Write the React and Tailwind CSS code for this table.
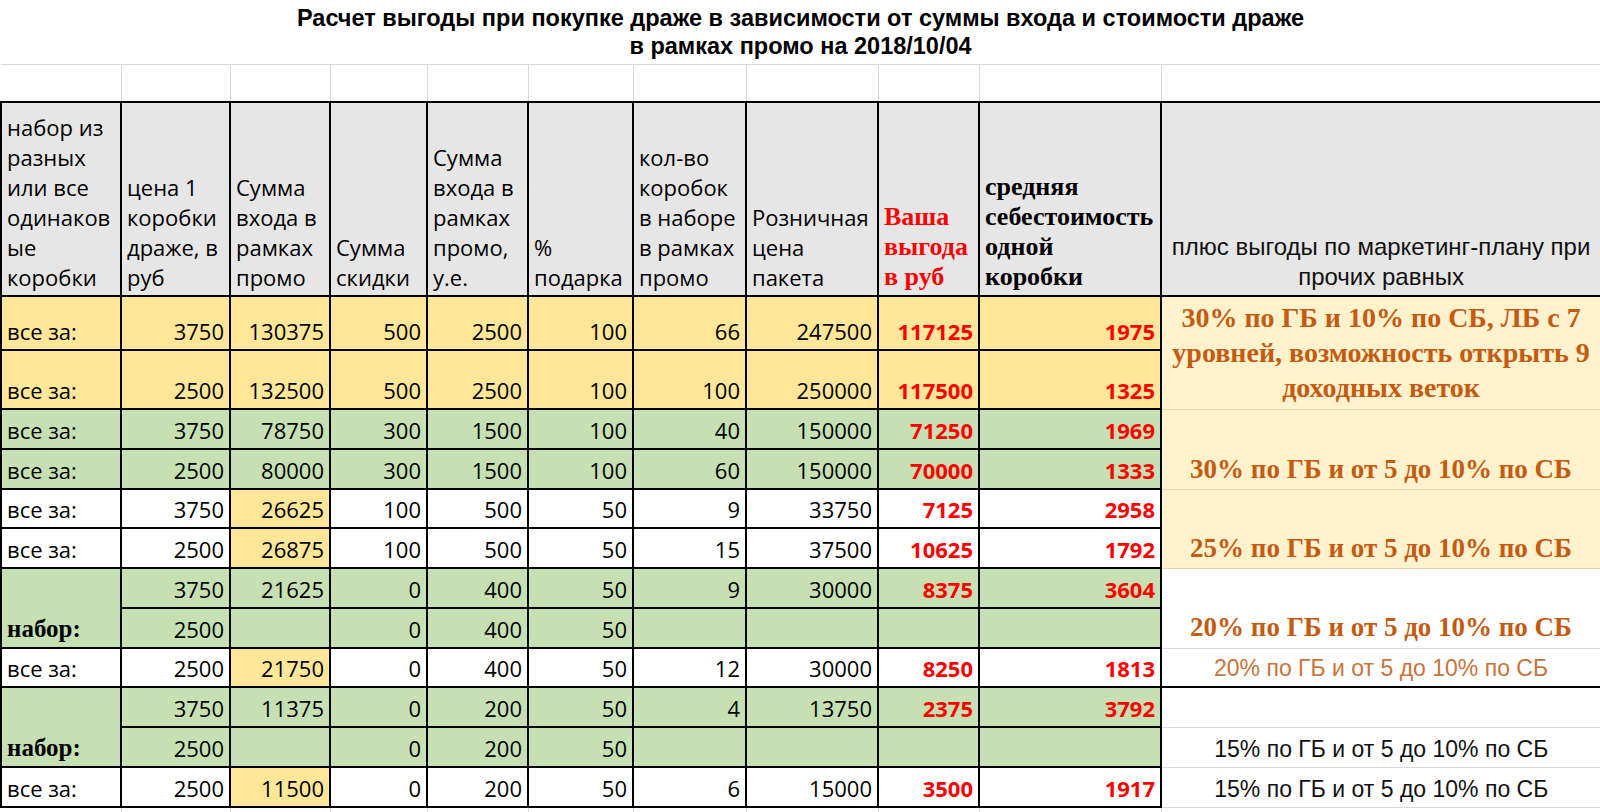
import React from "react";

const Y = "bg-[#ffe699]";
const G = "bg-[#c6e0b4]";
const W = "bg-white";

// spreadsheet cell basics; font and colour are added per cell so classes don't clash
const base =
  "border-2 border-black align-bottom px-[5px] pb-[3px] leading-[30px] whitespace-nowrap overflow-hidden";
const sans = "font-['Open_Sans',sans-serif] text-[22px]";
const cell = base + " " + sans + " text-black";
const num = cell + " text-right";
const red = base + " font-['Open_Sans',sans-serif] text-[22px] text-right font-bold text-[#ff0000]";
const rightBase = "text-center whitespace-nowrap overflow-hidden";

const Lines = ({ lines }) => (
  <>
    {lines.map((l, i) => (
      <div key={i}>{l}</div>
    ))}
  </>
);

const rows = [
  {
    h: "h-[54px]",
    bg: Y,
    c3: Y,
    label: "все за:",
    v: ["3750", "130375", "500", "2500", "100", "66", "247500"],
    r: ["117125", "1975"],
    right: {
      span: 2,
      cls: "bg-[#fff2cc] align-middle font-['Liberation_Serif',serif] font-bold text-[28px] leading-[35px] text-[#c55a11] border border-[#e3d6b4] border-r-2 border-r-black",
      lines: ["30% по ГБ и 10% по СБ, ЛБ с 7", "уровней, возможность открыть 9", "доходных веток"],
    },
  },
  {
    h: "h-[59px]",
    bg: Y,
    c3: Y,
    label: "все за:",
    v: ["2500", "132500", "500", "2500", "100", "100", "250000"],
    r: ["117500", "1325"],
  },
  {
    h: "h-[40px]",
    bg: G,
    c3: G,
    label: "все за:",
    v: ["3750", "78750", "300", "1500", "100", "40", "150000"],
    r: ["71250", "1969"],
    right: {
      span: 2,
      cls: "bg-[#fff2cc] align-bottom pb-[2px] font-['Liberation_Serif',serif] font-bold text-[27px] leading-[35px] text-[#c55a11] border border-[#e3d6b4] border-r-2 border-r-black",
      lines: ["30% по ГБ и от 5 до 10% по СБ"],
    },
  },
  {
    h: "h-[40px]",
    bg: G,
    c3: G,
    label: "все за:",
    v: ["2500", "80000", "300", "1500", "100", "60", "150000"],
    r: ["70000", "1333"],
  },
  {
    h: "h-[39px]",
    bg: W,
    c3: Y,
    label: "все за:",
    v: ["3750", "26625", "100", "500", "50", "9", "33750"],
    r: ["7125", "2958"],
    right: {
      span: 2,
      cls: "bg-[#fff2cc] align-bottom pb-[2px] font-['Liberation_Serif',serif] font-bold text-[27px] leading-[35px] text-[#c55a11] border border-[#e3d6b4] border-r-2 border-r-black",
      lines: ["25% по ГБ и от 5 до 10% по СБ"],
    },
  },
  {
    h: "h-[40px]",
    bg: W,
    c3: Y,
    label: "все за:",
    v: ["2500", "26875", "100", "500", "50", "15", "37500"],
    r: ["10625", "1792"],
  },
  {
    h: "h-[40px]",
    bg: G,
    c3: G,
    label: "набор",
    v: ["3750", "21625", "0", "400", "50", "9", "30000"],
    r: ["8375", "3604"],
    right: {
      span: 2,
      cls: "bg-white align-bottom pb-[3px] font-['Liberation_Serif',serif] font-bold text-[27px] leading-[35px] text-[#c55a11] border border-[#d9d9d9] border-r-2 border-r-black",
      lines: ["20% по ГБ и от 5 до 10% по СБ"],
    },
  },
  {
    h: "h-[40px]",
    bg: G,
    c3: G,
    label: null,
    v: ["2500", "", "0", "400", "50", "", ""],
    r: ["", ""],
  },
  {
    h: "h-[39px]",
    bg: W,
    c3: Y,
    label: "все за:",
    v: ["2500", "21750", "0", "400", "50", "12", "30000"],
    r: ["8250", "1813"],
    right: {
      span: 1,
      cls: "bg-white align-bottom pb-[3px] font-['Liberation_Sans',Arial,sans-serif] text-[23px] leading-[30px] text-[#c8733a] border border-[#d9d9d9] border-r-2 border-r-black border-b-2 border-b-black",
      lines: ["20% по ГБ и от 5 до 10% по СБ"],
    },
  },
  {
    h: "h-[40px]",
    bg: G,
    c3: G,
    label: "набор",
    v: ["3750", "11375", "0", "200", "50", "4", "13750"],
    r: ["2375", "3792"],
    right: {
      span: 1,
      cls: "bg-white border border-[#d9d9d9]",
      lines: [],
    },
  },
  {
    h: "h-[40px]",
    bg: G,
    c3: G,
    label: null,
    v: ["2500", "", "0", "200", "50", "", ""],
    r: ["", ""],
    right: {
      span: 1,
      cls: "bg-white align-bottom pb-[3px] font-['Liberation_Sans',Arial,sans-serif] text-[23px] leading-[30px] text-[#111] border border-[#d9d9d9]",
      lines: ["15% по ГБ и от 5 до 10% по СБ"],
    },
  },
  {
    h: "h-[40px]",
    bg: W,
    c3: Y,
    label: "все за:",
    v: ["2500", "11500", "0", "200", "50", "6", "15000"],
    r: ["3500", "1917"],
    right: {
      span: 1,
      cls: "bg-white align-bottom pb-[3px] font-['Liberation_Sans',Arial,sans-serif] text-[23px] leading-[30px] text-[#111] border border-[#d9d9d9]",
      lines: ["15% по ГБ и от 5 до 10% по СБ"],
    },
  },
];

const headers = [
  ["набор из", "разных", "или все", "одинаков", "ые", "коробки"],
  ["цена 1", "коробки", "драже, в", "руб"],
  ["Сумма", "входа в", "рамках", "промо"],
  ["Сумма", "скидки"],
  ["Сумма", "входа в", "рамках", "промо,", "у.е."],
  ["%", "подарка"],
  ["кол-во", "коробок", "в наборе", "в рамках", "промо"],
  ["Розничная", "цена", "пакета"],
];

function App() {
  return (
    <div className="w-[1600px] h-[812px] bg-white overflow-hidden">
      <table className="table-fixed border-collapse w-[1600px]">
        <colgroup>
          <col className="w-[120px]" />
          <col className="w-[109px]" />
          <col className="w-[100px]" />
          <col className="w-[97px]" />
          <col className="w-[101px]" />
          <col className="w-[105px]" />
          <col className="w-[113px]" />
          <col className="w-[132px]" />
          <col className="w-[101px]" />
          <col className="w-[182px]" />
          <col className="w-[440px]" />
        </colgroup>
        <tbody>
          <tr className="h-[64px]">
            <td
              colSpan={11}
              className="align-top pt-[4px] text-center font-['Liberation_Sans',Arial,sans-serif] font-bold text-[23.5px] leading-[28px] text-black border-b border-b-[#d9d9d9] border-r-2 border-r-black"
            >
              <div>Расчет выгоды при покупке драже в зависимости от суммы входа и стоимости драже</div>
              <div>в рамках промо на 2018/10/04</div>
            </td>
          </tr>
          <tr className="h-[38px]">
            {Array.from({ length: 10 }).map((_, i) => (
              <td key={i} className="border-r border-r-[#d9d9d9]" />
            ))}
            <td className="border-r-2 border-r-black" />
          </tr>
          <tr className="h-[194px]">
            {headers.map((h, i) => (
              <td key={i} className={cell + " bg-[#e7e6e6]"}>
                <Lines lines={h} />
              </td>
            ))}
            <td className={base + " bg-[#e7e6e6] font-['Liberation_Serif',serif] font-bold text-[26px] text-[#ff0000]"}>
              <Lines lines={["Ваша", "выгода", "в руб"]} />
            </td>
            <td className={base + " bg-[#e7e6e6] font-['Liberation_Serif',serif] font-bold text-[26px] text-black"}>
              <Lines lines={["средняя", "себестоимость", "одной", "коробки"]} />
            </td>
            <td className="border-2 border-black bg-[#e7e6e6] align-bottom text-center pb-[3px] font-['Liberation_Sans',Arial,sans-serif] text-[24px] leading-[30px] text-[#111] whitespace-nowrap">
              <Lines lines={["плюс выгоды по маркетинг-плану при", "прочих равных"]} />
            </td>
          </tr>
          {rows.map((row, ri) => (
            <tr key={ri} className={row.h}>
              {row.label === "набор" ? (
                <td
                  rowSpan={2}
                  className={base + " " + row.bg + " font-['Liberation_Serif',serif] font-bold text-[25px] text-black"}
                >
                  набор:
                </td>
              ) : row.label ? (
                <td className={cell + " " + row.bg}>{row.label}</td>
              ) : null}
              {row.v.map((v, i) => (
                <td key={i} className={num + " " + (i === 1 ? row.c3 : row.bg)}>
                  {v}
                </td>
              ))}
              {row.r.map((v, i) => (
                <td key={i} className={red + " " + row.bg}>
                  {v}
                </td>
              ))}
              {row.right ? (
                <td rowSpan={row.right.span} className={rightBase + " " + row.right.cls}>
                  <Lines lines={row.right.lines} />
                </td>
              ) : null}
            </tr>
          ))}
          <tr className="h-[6px]">
            {Array.from({ length: 11 }).map((_, i) => (
              <td key={i} className="border-r border-r-[#d9d9d9]" />
            ))}
          </tr>
        </tbody>
      </table>
    </div>
  );
}

export default App;
